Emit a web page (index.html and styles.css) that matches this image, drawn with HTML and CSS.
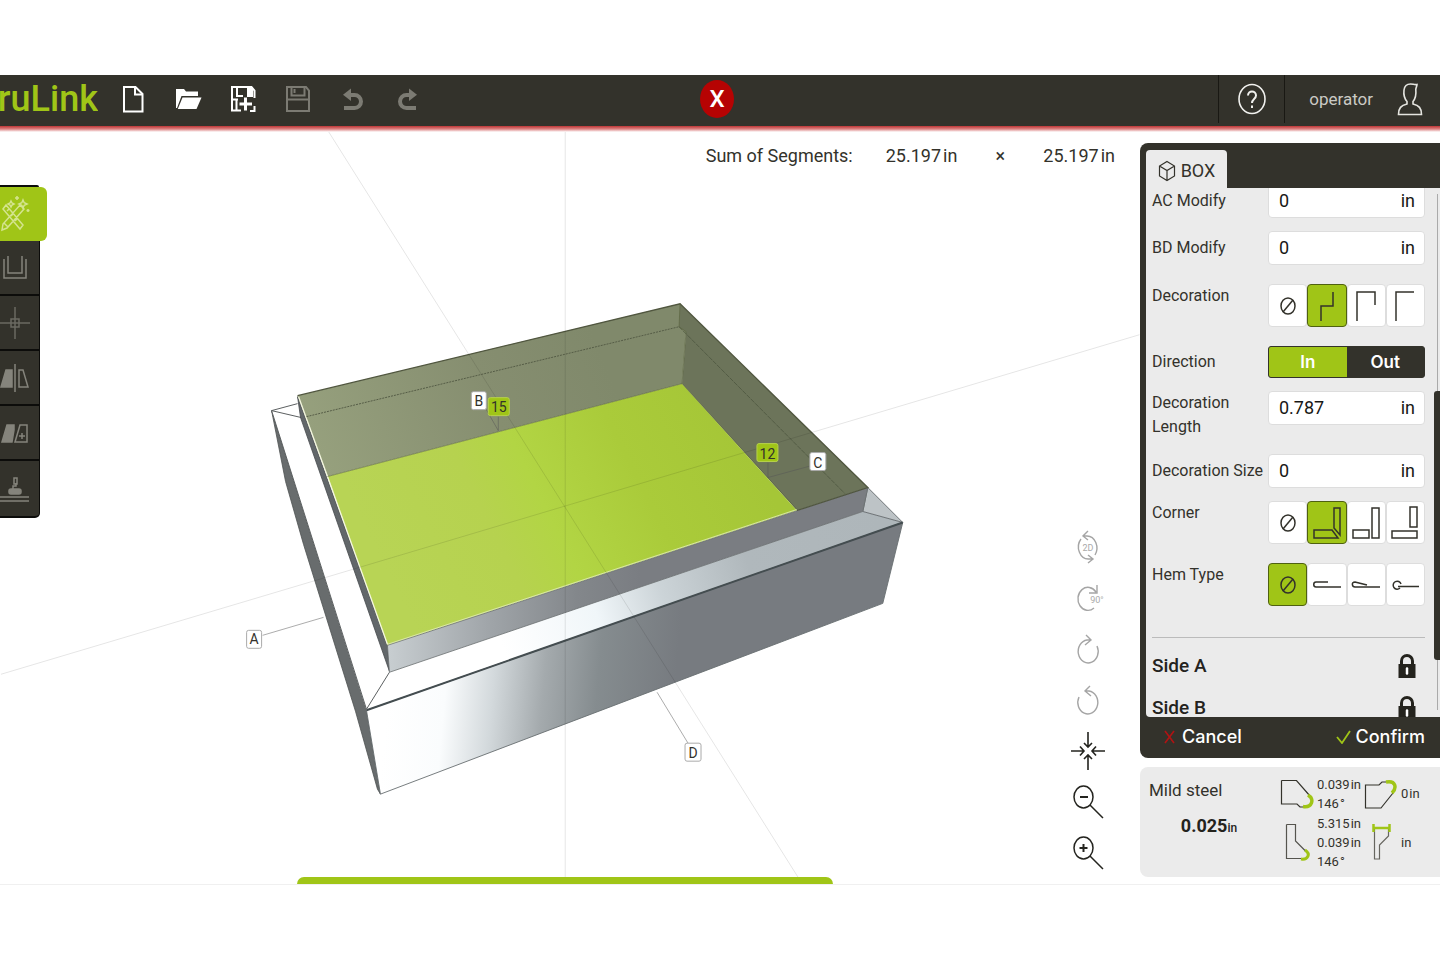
FILE: index.html
```html
<!DOCTYPE html>
<html lang="en">
<head>
<meta charset="utf-8">
<title>Box editor</title>
<link rel="stylesheet" href="styles.css">
</head>
<body>
<div class="app">
  <header class="topbar">
    <div class="topbar-left">
      <div class="logo"><span>ruLink</span></div>
      <nav class="file-tools" aria-label="File">
        <button class="bar-btn" aria-label="New"><svg width="24" height="30" viewBox="0 0 24 30" fill="none" stroke="#fff" stroke-width="2"><path d="M3 3h11.500l7 7v17.500H3z"/><path d="M14 3v7.500h7.500"/></svg></button>
        <button class="bar-btn" aria-label="Open"><svg width="28" height="30" viewBox="0 0 28 30" fill="#fff"><path d="M2 5h8l2 2.500h12V12H7.500L3 24H2z"/><path d="M8.500 13.500H27.500L22.500 25H3.800z"/></svg></button>
        <button class="bar-btn" aria-label="Save as"><svg width="26" height="30" viewBox="0 0 26 30" fill="none" stroke="#fff" stroke-width="2"><path d="M11 26.500H2V3h19.500l3 3.500V14"/><path d="M7 3v9h6M2 15.500h6M6.500 15v11" /><path d="M18 3v9h4V3" fill="#fff"/><path d="M15.500 13.500v13M9.500 20h12.500" stroke-width="3"/><path d="M20 27h4.500v-5"/></svg></button>
        <button class="bar-btn" aria-label="Save" disabled><svg width="26" height="30" viewBox="0 0 26 30" fill="none" stroke="#7c7b73" stroke-width="2"><path d="M2 3h19l3 3.500V27H2z"/><path d="M6.500 3v8.500h13V3M2 15.500h22" /><path d="M9.500 5v4"/></svg></button>
        <button class="bar-btn" aria-label="Undo" disabled><svg width="24" height="30" viewBox="0 0 24 30" fill="none" stroke="#7c7b73" stroke-width="4"><path d="M7 11h6.500a6.500 6.500 0 0 1 0 13H3"/><path d="M10 4.500v12.500L2 10.700z" fill="#7c7b73" stroke="none"/></svg></button>
        <button class="bar-btn" aria-label="Redo" disabled><svg width="24" height="30" viewBox="0 0 24 30" fill="none" stroke="#7c7b73" stroke-width="4"><path d="M16 11H10.500a6.500 6.500 0 0 0 0 13H20"/><path d="M13 4.500v12.500l8-6.300z" fill="#7c7b73" stroke="none"/></svg></button>
      </nav>
    </div>
    <button class="stop-btn" aria-label="Close">X</button>
    <div class="topbar-right">
      <button class="help-btn" aria-label="Help"><svg width="30" height="34" viewBox="0 0 30 34" fill="none" stroke="#f1f1ee" stroke-width="1.600"><ellipse cx="15" cy="17" rx="13" ry="14.500"/><path d="M11 13.500c0-5.500 8-5.500 8 0 0 3.500-4 3.500-4 7.500M15 23.500v2.500" stroke-width="2"/></svg></button>
      <button class="user-btn"><span>operator</span><svg width="26" height="36" viewBox="0 0 26 36" fill="none" stroke="#e5e5e0" stroke-width="1.600"><path d="M10 20.500C7 17 6.500 13 7 9c.5-4 3-6 6.500-6 2.500 0 4 1 6.500.500 0 2-1.200 3.200-1.200 5 .5 5-.3 9-2.800 12v2.500c6 1.500 8.500 4 8.500 10.500H1.500c0-6.500 2.500-9 8.500-10.500z"/></svg></button>
    </div>
  </header>

  <main class="workspace">
    <svg class="scene" viewBox="0 126 1440 759" role="img" aria-label="3D view of the box">
      <defs>
        <linearGradient id="front" gradientUnits="userSpaceOnUse" x1="385" y1="720" x2="720" y2="750"><stop offset="0" stop-color="#fff"/><stop offset=".17" stop-color="#fafcfd"/><stop offset=".31" stop-color="#d3d9dc"/><stop offset=".46" stop-color="#a4aaad"/><stop offset=".62" stop-color="#858c8f"/><stop offset=".85" stop-color="#777b80"/></linearGradient>
        <linearGradient id="flange" gradientUnits="userSpaceOnUse" x1="500" y1="640" x2="880" y2="520"><stop offset="0" stop-color="#fff"/><stop offset=".25" stop-color="#f0f6f9"/><stop offset=".42" stop-color="#ccd4d8"/><stop offset=".65" stop-color="#b0b8bc"/><stop offset="1" stop-color="#aeb6ba"/></linearGradient>
        <linearGradient id="lip" gradientUnits="userSpaceOnUse" x1="387" y1="0" x2="640" y2="0"><stop offset="0" stop-color="#c8ced1"/><stop offset=".4" stop-color="#a0a5a9"/><stop offset=".75" stop-color="#83878b"/><stop offset="1" stop-color="#7a7d82"/></linearGradient>
        <linearGradient id="floor" gradientUnits="userSpaceOnUse" x1="400" y1="600" x2="740" y2="430"><stop offset="0" stop-color="#b8d455"/><stop offset=".3" stop-color="#b6d24f"/><stop offset=".45" stop-color="#b2d544"/><stop offset=".7" stop-color="#aacb3a"/><stop offset="1" stop-color="#a5c637"/></linearGradient>
        <linearGradient id="back" gradientUnits="userSpaceOnUse" x1="320" y1="460" x2="600" y2="350"><stop offset="0" stop-color="#96a07d"/><stop offset=".6" stop-color="#868e70"/><stop offset="1" stop-color="#80896b"/></linearGradient>
      </defs>
      <path d="M271 411L366 710 380 795 377 790 355 712 303 545 285 482z" fill="#686c6d" stroke="#4e5252" stroke-width=".8"/>
      <path d="M271 411L297 404 868 488 903 523 366 711z" fill="#fff"/>
      <path d="M389 673L863 512 903 523 366 711z" fill="url(#flange)"/>
      <path d="M868 488L903 523 863 512z" fill="#bdc3c6" stroke="#555b5e" stroke-width=".8"/>
      <path d="M366 711L903 523 883 604 380 795z" fill="url(#front)" stroke="#686e70" stroke-width=".9"/>
      <path d="M366 711L903 523" stroke="#444d50" stroke-width="2"/>
      <path d="M271 411L366 710M389 673L366 710M271 411L301 418M271 411L297 404" stroke="#5b5f60" stroke-width="1" fill="none"/>
      <path d="M297 397L387 646 389 672 300 418z" fill="#62676a" stroke="#45494b" stroke-width=".8"/>
      <path d="M297 396L680 304 686 332 682 384 327 477z" fill="url(#back)"/>
      <path d="M680 304L868 488 797 511 682 384 686 332 679 327z" fill="#6c745a"/>
      <path d="M327 477L682 384 797 511 387 646z" fill="url(#floor)"/>
      <path d="M387 646L868 488 863 512 389 673z" fill="url(#lip)" stroke="#6a6e70" stroke-width=".8"/>
      <path d="M298 397L327 477 387 645" stroke="#f4f7df" stroke-width="1.300" fill="none"/>
      <path d="M387 645L797 510" stroke="#e3ecc0" stroke-width=".8" fill="none"/>
      <path d="M297 396L680 304 868 488 797 511" stroke="#50563f" stroke-width="1.300" fill="none"/>
      <path d="M680 304L679 327 686 332 682 384M327 477L682 384 797 510" stroke="#59633c" stroke-width=".6" fill="none"/>
      <path d="M306 417L679 327" stroke="#555c46" stroke-width="1" stroke-dasharray="2 1" fill="none"/>
      <path d="M679 327L845 494" stroke="#4d553f" stroke-width=".8" stroke-dasharray="5 1" fill="none"/>
      <g stroke="#000" stroke-opacity=".13" fill="none"><path d="M565 130V878M0 675L1140 335M327 130L798 878" stroke-width=".8"/></g>
      <path d="M262 636L323 618M657 693L688 744M486 410L498 431V417M812 466L768 478V463" stroke="#555" stroke-opacity=".55" stroke-width=".9" fill="none"/>
      <g class="tag">
        <rect x="246" y="631" width="15" height="18" rx="2"/><text x="253.500" y="645">A</text>
        <rect x="471" y="392" width="15" height="18" rx="2"/><text x="478.500" y="406">B</text>
        <rect x="810" y="453" width="16" height="18" rx="2"/><text x="818" y="468">C</text>
        <rect x="685" y="744" width="16" height="18" rx="2"/><text x="693" y="759">D</text>
      </g>
      <g class="tag tag-size">
        <rect x="488" y="398" width="21" height="18" rx="2"/><text x="498.500" y="412">15</text>
        <rect x="757" y="444" width="21" height="18" rx="2"/><text x="767.500" y="459">12</text>
      </g>
    </svg>

    <nav class="toolbox" aria-label="Tools">
      <button class="tool tool-active" aria-label="Design"><svg width="34" height="44" viewBox="0 0 34 44" fill="none" stroke="#d4e48f" stroke-width="1.500"><path d="M3 17l3-4 17 20-3 4zM7 19l2-2M11 24l2-2M15 29l2-2M20 13l4 4L7 36l-5 2 1-6zM4 31l4 4"/><path d="M11 9l1 2 2 1-2 1-1 2-1-2-2-1 2-1zM23 8l1.200 2.800L27 12l-2.800 1.200L23 16l-1.200-2.800L19 12l2.800-1.200z"/><path d="M17 4v4M15 6h4M28 17v3M26.500 18.500h3"/></svg></button>
      <button class="tool" aria-label="Profile"><svg width="30" height="34" viewBox="0 0 30 34" fill="none" stroke="#85847c" stroke-width="1.500"><path d="M4 8v19h22V8M8 5v17h14V5"/></svg></button>
      <button class="tool" aria-label="Origin"><svg width="30" height="34" viewBox="0 0 30 34" fill="none" stroke="#6b6a62" stroke-width="1.500"><path d="M0 17h30M15 1v32M11 13h8v8h-8z"/></svg></button>
      <button class="tool" aria-label="Mirror"><svg width="30" height="34" viewBox="0 0 30 34" fill="none" stroke="#85847c" stroke-width="1.500"><path d="M1 26L6 9h6v17z" fill="#85847c"/><path d="M15 3v28M19 9h4l5 17h-9z"/></svg></button>
      <button class="tool" aria-label="Add part"><svg width="30" height="34" viewBox="0 0 30 34" fill="none" stroke="#85847c" stroke-width="1.500"><path d="M2 26L7 9h7v5l-2 12z" fill="#85847c"/><path d="M15 26l5-17h7v17zM19 20h6M22 17v6"/></svg></button>
      <button class="tool" aria-label="Weld"><svg width="30" height="34" viewBox="0 0 30 34" fill="none" stroke="#85847c" stroke-width="1.500"><path d="M0 25h29M0 29h29" /><rect x="9" y="17" width="12" height="5" rx="2" fill="#85847c"/><path d="M13 17v-3h3v-3M14 6h3v6h-3z"/></svg></button>
    </nav>

    <section class="stage">
      <div class="summary"><span>Sum of Segments:</span><span class="value">25.197<span>in</span></span><span>×</span><span class="value">25.197<span>in</span></span></div>
      <div class="view-tools">
        <button aria-label="2D view"><svg width="34" height="40" viewBox="0 0 34 40" fill="none" stroke="#a5a5a5" stroke-width="1.400"><path d="M12 9h4a10 12 0 0 1 8 19M22 32h-4A10 12 0 0 1 10 12M17 4l-5 5 5 4M17 28l5 4-5 4"/><text class="glyph-label" x="17" y="24">2D</text></svg></button>
        <button aria-label="Rotate 90 degrees"><svg width="34" height="40" viewBox="0 0 34 40" fill="none" stroke="#a5a5a5" stroke-width="1.400"><path d="M23 30a10 11.500 0 1 1 2-16M26 7v8h-8"/><text class="glyph-label" x="26" y="25">90°</text></svg></button>
        <button aria-label="Rotate clockwise"><svg width="34" height="40" viewBox="0 0 34 40" fill="none" stroke="#a5a5a5" stroke-width="1.400"><path d="M20 11h-4a10 11.500 0 1 0 10 6M15 6l5 5-6 5"/></svg></button>
        <button aria-label="Rotate counterclockwise"><svg width="34" height="40" viewBox="0 0 34 40" fill="none" stroke="#a5a5a5" stroke-width="1.400"><path d="M14 11h4a10 11.500 0 1 1-10 6M19 6l-5 5 6 5"/></svg></button>
        <button aria-label="Fit view"><svg width="36" height="40" viewBox="0 0 36 40" fill="none" stroke="#24241f" stroke-width="1.600"><path d="M18 1v15M14 12l4 4 4-4M18 39V24M14 28l4-4 4 4M1 20h13M10 15.500l4 4.500-4 4.500M35 20H22M26 15.500L22 20l4 4.500"/></svg></button>
        <button aria-label="Zoom out"><svg width="34" height="40" viewBox="0 0 34 40" fill="none" stroke="#24241f" stroke-width="1.500"><ellipse cx="12.500" cy="15" rx="9.500" ry="11"/><path d="M19 23l13 13"/><path d="M9 15h8" stroke-width="2"/></svg></button>
        <button aria-label="Zoom in"><svg width="34" height="40" viewBox="0 0 34 40" fill="none" stroke="#24241f" stroke-width="1.500"><ellipse cx="12.500" cy="15" rx="9.500" ry="11"/><path d="M19 23l13 13"/><path d="M8.500 15h8M12.500 11v8" stroke-width="2"/></svg></button>
      </div>
    </section>

    <aside class="side">
      <section class="panel">
        <div class="tabs"><button class="tab"><svg width="18" height="22" viewBox="0 0 18 22" fill="none" stroke="#33322b" stroke-width="1.200"><path d="M9 1.500l7.500 4.500v10L9 20.500 1.500 16V6zM1.500 6L9 10.500 16.500 6M9 10.500v10"/></svg>BOX</button></div>
        <div class="panel-body">
          <form class="fields">
            <div class="row row-mid"><label for="ac">AC Modify</label><div class="box-input"><input id="ac" value="0"><span>in</span></div></div>
            <div class="row row-mid row-wide"><label for="bd">BD Modify</label><div class="box-input"><input id="bd" value="0"><span>in</span></div></div>
            <div class="row row-wide" role="group" aria-labelledby="deco"><span id="deco">Decoration</span><div class="choices">
              <button type="button" aria-label="None"><svg width="38" height="42" viewBox="0 0 38 42"><ellipse cx="19" cy="21" rx="7" ry="8"/><path d="M14 27L24 15"/></svg></button>
              <button type="button" class="on" aria-label="Step"><svg width="38" height="42" viewBox="0 0 38 42"><path d="M13 36V21h12V7"/></svg></button>
              <button type="button" aria-label="Hook"><svg width="38" height="42" viewBox="0 0 38 42"><path d="M10 36V7h18v13"/></svg></button>
              <button type="button" aria-label="Angle"><svg width="38" height="42" viewBox="0 0 38 42"><path d="M10 36V7h18"/></svg></button>
            </div></div>
            <div class="row row-mid" role="group" aria-labelledby="dir"><span id="dir">Direction</span><div class="switch"><button type="button" class="on">In</button><button type="button">Out</button></div></div>
            <div class="row"><label for="len">Decoration Length</label><div class="box-input"><input id="len" value="0.787"><span>in</span></div></div>
            <div class="row row-mid"><label for="size">Decoration Size</label><div class="box-input"><input id="size" value="0"><span>in</span></div></div>
            <div class="row row-wide" role="group" aria-labelledby="corner"><span id="corner">Corner</span><div class="choices">
              <button type="button" aria-label="None"><svg width="38" height="42" viewBox="0 0 38 42"><ellipse cx="19" cy="21" rx="7" ry="8"/><path d="M14 27L24 15"/></svg></button>
              <button type="button" class="on" aria-label="Mitre"><svg width="38" height="42" viewBox="0 0 38 42"><path d="M6 28h18l6 8H6zM26 6h6v27l-6-7z"/></svg></button>
              <button type="button" aria-label="Side over"><svg width="38" height="42" viewBox="0 0 38 42"><path d="M6 28h16v8H6zM25 6h7v30h-7z"/></svg></button>
              <button type="button" aria-label="Front over"><svg width="38" height="42" viewBox="0 0 38 42"><path d="M6 29h25v7H6zM24 5h7v20h-7z"/></svg></button>
            </div></div>
            <div class="row" role="group" aria-labelledby="hem"><span id="hem">Hem Type</span><div class="choices">
              <button type="button" class="on" aria-label="None"><svg width="38" height="42" viewBox="0 0 38 42"><ellipse cx="19" cy="21" rx="7" ry="8"/><path d="M14 27L24 15"/></svg></button>
              <button type="button" aria-label="Closed hem"><svg width="38" height="42" viewBox="0 0 38 42"><path d="M20 18H8c-3 0-3 5 0 5h25"/></svg></button>
              <button type="button" aria-label="Open hem"><svg width="38" height="42" viewBox="0 0 38 42"><path d="M20 21L8 18c-4 0-3 5 0 5h25"/></svg></button>
              <button type="button" aria-label="Rolled hem"><svg width="38" height="42" viewBox="0 0 38 42"><path d="M15 20a4 4 0 1 0-1 4M12 22.500h21"/></svg></button>
            </div></div>
          </form>
          <div class="sides">
            <div class="side-row"><span>Side A</span><svg width="18" height="26" viewBox="0 0 18 26"><path d="M3.500 12V8a5.500 5.500 0 0 1 11 0v4" fill="none" stroke="#24231d" stroke-width="3"/><path d="M.500 11h17v14H.500z" fill="#24231d"/><path d="M9 15.500v5" stroke="#fff" stroke-width="2.500" stroke-linecap="round"/></svg></div>
            <div class="side-row"><span>Side B</span><svg width="18" height="26" viewBox="0 0 18 26"><path d="M3.500 12V8a5.500 5.500 0 0 1 11 0v4" fill="none" stroke="#24231d" stroke-width="3"/><path d="M.500 11h17v14H.500z" fill="#24231d"/><path d="M9 15.500v5" stroke="#fff" stroke-width="2.500" stroke-linecap="round"/></svg></div>
          </div>
          <div class="scroll-track"><div class="scroll-thumb"></div></div>
        </div>
        <footer class="panel-actions">
          <button><svg width="11" height="14" viewBox="0 0 11 14" fill="none" stroke="#b01313" stroke-width="1.600"><path d="M1 1l9 12M10 1L1 13"/></svg>Cancel</button>
          <button class="confirm"><svg width="15" height="14" viewBox="0 0 15 14" fill="none" stroke="#a0c517" stroke-width="1.800"><path d="M1 7l5 6 8-12"/></svg>Confirm</button>
        </footer>
      </section>

      <section class="material">
        <div class="material-name"><p>Mild steel</p><strong>0.025<small>in</small></strong></div>
        <div class="punches">
          <svg width="34" height="34" viewBox="0 0 34 34" fill="none" stroke="#33322b" stroke-width="1.200"><path d="M1.500 3.500h15L30 19M1.500 3.500V27H17l3 3h4"/><path d="M28 18c7 4 4 13-5 11.500" stroke="#a0c517" stroke-width="3.500"/></svg>
          <p>0.039<span>in</span><br>146<span>°</span></p>
          <svg width="34" height="34" viewBox="0 0 34 34" fill="none" stroke="#33322b" stroke-width="1.200"><path d="M22 5h-4l-3 3H1.500v23H17l12-15"/><path d="M22 5c10-2 11 6 6 11" stroke="#a0c517" stroke-width="3.500"/></svg>
          <p>0<span>in</span></p>
          <svg width="34" height="42" viewBox="0 0 34 42" fill="none" stroke="#55544e" stroke-width="1.200"><path d="M6.500 3.500h9V20l10 10M6.500 3.500V37.500H21"/><path d="M25 29c6 4 3 10-4 9" stroke="#a0c517" stroke-width="3"/></svg>
          <p>5.315<span>in</span><br>0.039<span>in</span><br>146<span>°</span></p>
          <svg width="34" height="42" viewBox="0 0 34 42" fill="none" stroke="#66655f" stroke-width="1.200"><path d="M10.500 8v30h5V24l9-9V8"/><path d="M9.500 3v8M25.500 3v8M9.500 7h16" stroke="#a0c517" stroke-width="2.500"/></svg>
          <p>in</p>
        </div>
      </section>
    </aside>
    <button class="drawer" aria-label="Open drawer"></button>
  </main>
</div>
</body>
</html>
```
FILE: styles.css
```css
* { box-sizing: border-box; }
body {
  margin: 0;
  padding: 75px 0;
  min-height: 100vh;
  display: flex;
  background: #fff;
  color: #33322b;
  font-family: Roboto, "Liberation Sans", sans-serif;
  font-size: 16px;
  line-height: 24px;
}
button, input { font: inherit; color: inherit; }
button { border: 0; padding: 0; background: none; cursor: pointer; }
p { margin: 0; }
svg { display: block; flex: none; }
.app { flex: 1; display: flex; flex-direction: column; min-width: 0; overflow: hidden; }

/* top bar */
.topbar {
  position: relative;
  z-index: 2;
  display: grid;
  grid-template-columns: 1fr auto 1fr;
  align-items: center;
  height: 51px;
  padding: 0 6px 3px 0;
  background: #33322b;
}
.topbar::after {
  content: "";
  position: absolute;
  inset: 100% 0 auto 0;
  height: 6px;
  background: linear-gradient(#bd3535, #dc8080 50%, #fff);
}
.topbar-left { display: flex; align-items: center; gap: 22px; }
.logo {
  width: 98px;
  display: flex;
  justify-content: flex-end;
  overflow: hidden;
  color: #a0c517;
  font-size: 36px;
  font-weight: 500;
  line-height: 48px;
}
.file-tools { display: flex; gap: 29px; }
.bar-btn { width: 26px; display: flex; justify-content: center; }
.stop-btn {
  width: 34px;
  height: 38px;
  border-radius: 50%;
  background: #b60303;
  color: #fff;
  font-size: 24px;
  font-weight: 500;
}
.topbar-right { align-self: stretch; display: flex; justify-content: flex-end; }
.help-btn {
  width: 67px;
  display: flex;
  align-items: center;
  justify-content: center;
  border: solid #191813;
  border-width: 0 1px;
}
.user-btn { display: flex; align-items: center; gap: 24px; padding: 0 11px 0 24px; color: #cbcac5; font-size: 17px; }

/* workspace */
.workspace { position: relative; flex: 1; display: flex; align-items: flex-start; border-bottom: 1px solid #f0f0f0; }
.scene { position: absolute; inset: 0; width: 100%; height: 100%; }
.tag rect { fill: #fff; stroke: #aaa; }
.tag text { fill: #33322b; font-size: 14px; text-anchor: middle; }
.tag-size rect { fill: #a0c517; stroke: #b7d24b; }
.toolbox { position: relative; width: 47px; margin-top: 59px; display: flex; flex-direction: column; }
.toolbox::before { content: ""; width: 39px; height: 2px; border-radius: 0 2px 0 0; background: #0c0c0a; }
.tool {
  width: 40px;
  height: 55px;
  display: flex;
  align-items: center;
  background: #33322b;
  border: solid #0c0c0a;
  border-width: 0 1px 2px 0;
}
.tool:last-child { height: 57px; border-radius: 0 0 5px 0; }
.tool-active { width: 47px; height: 54px; border: 0; background: #a0c517; border-radius: 0 6px 6px 0; }
.stage {
  position: relative;
  flex: 1;
  align-self: stretch;
  display: flex;
  flex-direction: column;
  align-items: flex-end;
  justify-content: space-between;
  padding: 18px 25px 6px 0;
}
.summary { display: flex; font-size: 18px; gap: 33px; }
.summary > :nth-child(3) { width: 20px; text-align: center; }
.value { display: flex; gap: 2px; }
.view-tools { width: 54px; display: flex; flex-direction: column; }
.view-tools button { height: 51px; display: flex; align-items: center; justify-content: center; }
.glyph-label { font-size: 9px; fill: #aaa; stroke: none; text-anchor: middle; }
.drawer { position: absolute; left: 297px; bottom: 0; width: 536px; height: 7px; border-radius: 8px 8px 0 0; background: #a0c517; }

/* right column */
.side { position: relative; width: 300px; padding-top: 17px; display: flex; flex-direction: column; gap: 9px; }
.panel { background: #33322b; border-radius: 8px 0 0 8px; padding: 7px 0 0 6px; }
.tab {
  height: 38px;
  width: 81px;
  display: flex;
  align-items: center;
  justify-content: center;
  gap: 5px;
  padding-top: 3px;
  background: #ebebeb;
  border-radius: 4px 4px 0 0;
  font-size: 18px;
}
.panel-body { position: relative; height: 529px; overflow: hidden; background: #ebebeb; border-radius: 0 0 0 4px; padding: 0 15px 0 6px; }
.fields { margin-top: -4px; }
.row { display: grid; grid-template-columns: 116px minmax(0, 1fr); align-items: start; margin-bottom: 15px; }
.row-mid { align-items: center; margin-bottom: 13px; }
.row-wide { margin-bottom: 19px; }
.box-input {
  height: 34px;
  display: flex;
  align-items: center;
  padding: 0 9px 0 10px;
  background: #fff;
  border: 1px solid #ddd;
  border-radius: 4px;
  color: #181815;
  font-size: 18px;
}
.box-input input { flex: 1; min-width: 0; border: 0; padding: 0; background: none; outline: 0; }
.choices { display: grid; grid-template-columns: repeat(4, minmax(0, 1fr)); }
.choices button { height: 43px; display: flex; align-items: center; justify-content: center; overflow: hidden; background: #fff; border: 1px solid #ddd; border-radius: 4px; }
.choices svg { fill: none; stroke: #33322b; stroke-width: 1.5; }
.choices .on { background: #a0c517; border-color: #4f6110; }
.switch { display: grid; grid-template-columns: 1fr 1fr; height: 32px; border: 1px solid #33322b; border-radius: 3px; overflow: hidden; background: #33322b; color: #fff; font: 600 17px/24px Inter, sans-serif; }
.switch .on { background: #a0c517; }
.sides { margin-top: 31px; border-top: 1px solid #bbb; padding-top: 7px; font-size: 19px; font-weight: 500; color: #24231d; }
.side-row { display: flex; align-items: center; justify-content: space-between; height: 42px; padding-right: 9px; }
.scroll-track { position: absolute; top: 6px; bottom: 7px; right: 0; width: 6px; background: linear-gradient(#aaa, #aaa) 3px 0 / 1px 100% no-repeat; }
.scroll-thumb { height: 269px; margin-top: 197px; border-radius: 3px 0 0 3px; background: #33322b; }
.panel-actions { height: 41px; display: flex; justify-content: space-between; align-items: center; padding: 0 15px 2px 18px; color: #fff; font: 500 18px/24px Inter, sans-serif; }
.panel-actions button { display: flex; align-items: center; gap: 7px; }
.panel-actions .confirm { gap: 5px; }
.material { height: 110px; display: flex; justify-content: space-between; padding: 7px 14px 6px 9px; background: #ebebeb; border-radius: 8px 0 0 8px; }
.material-name { width: 120px; display: flex; flex-direction: column; align-items: center; gap: 12px; padding-top: 4px; }
.material-name p { align-self: flex-start; font-size: 17px; }
.material-name strong { font-size: 18px; color: #24231d; }
.material-name small { font-size: 12px; font-weight: 500; }
.punches { display: grid; grid-template-columns: 34px 44px 34px 25px; column-gap: 3px; align-items: center; font-size: 13px; line-height: 19px; white-space: nowrap; }
.punches span { margin-left: 1px; }
```
